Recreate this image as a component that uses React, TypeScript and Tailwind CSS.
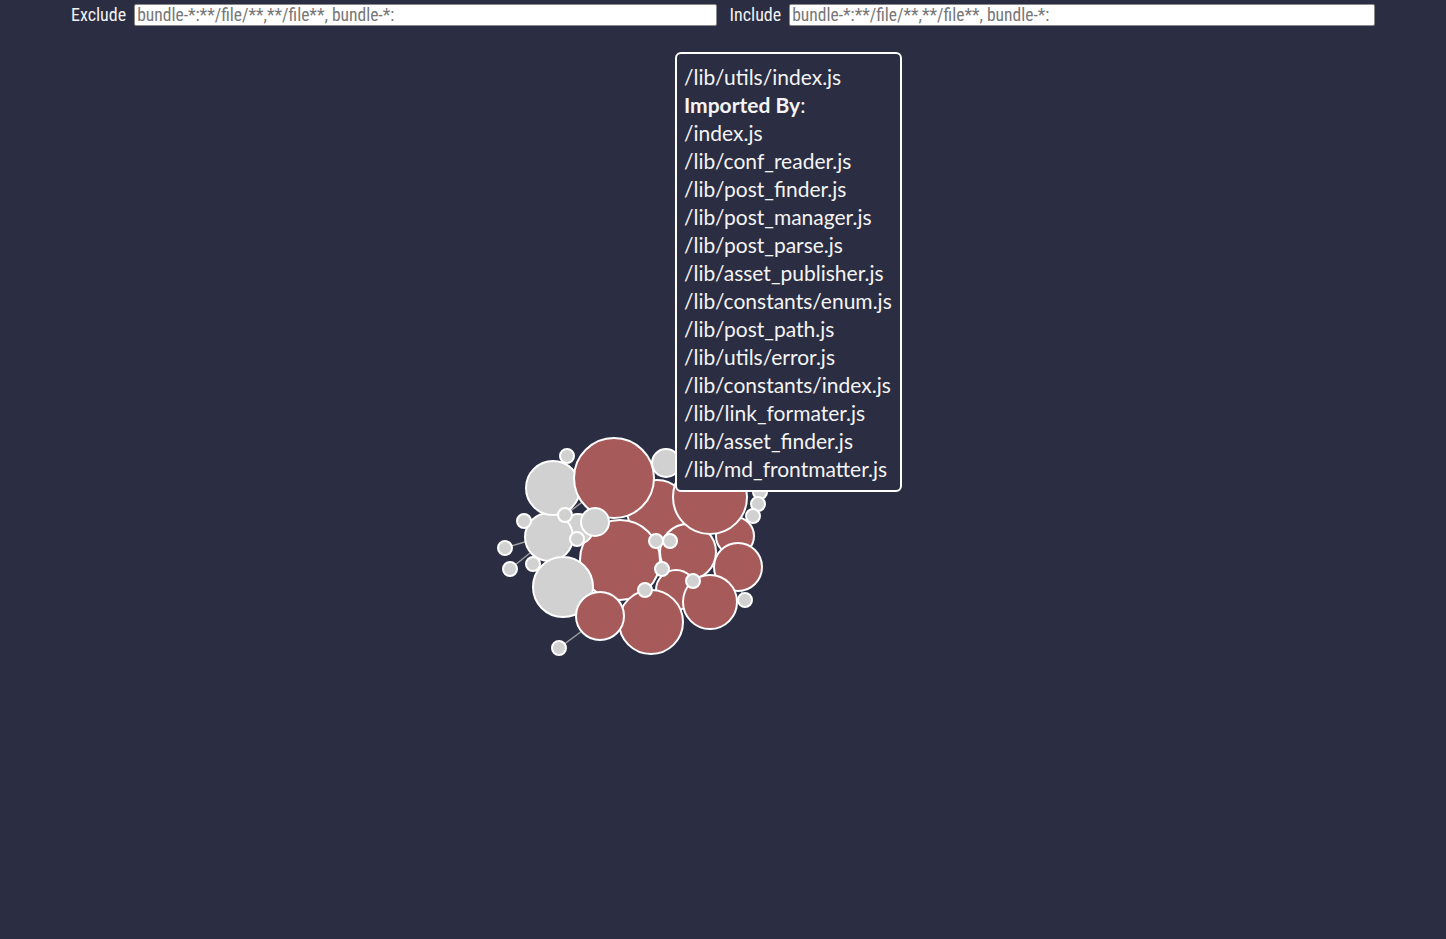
import React from 'react';

type Node = { x: number; y: number; r: number; c: 'red' | 'gray' };

const FILL = { red: '#a65b5a', gray: '#d1d1d1' };

// back to front
const nodes: Node[] = [
  { x: 666, y: 463, r: 14, c: 'gray' },
  { x: 657, y: 510, r: 30, c: 'red' },
  { x: 688, y: 552, r: 28, c: 'red' },
  { x: 676, y: 590, r: 20, c: 'red' },
  { x: 620, y: 560, r: 40, c: 'red' },
  { x: 735, y: 536, r: 19, c: 'red' },
  { x: 738, y: 567, r: 24, c: 'red' },
  { x: 710, y: 497, r: 37, c: 'red' },
  { x: 578, y: 529, r: 15, c: 'gray' },
  { x: 549, y: 537, r: 24, c: 'gray' },
  { x: 553, y: 488, r: 27, c: 'gray' },
  { x: 614, y: 478, r: 40, c: 'red' },
  { x: 595, y: 522, r: 14, c: 'gray' },
  { x: 563, y: 587, r: 30, c: 'gray' },
  { x: 651, y: 622, r: 32, c: 'red' },
  { x: 710, y: 602, r: 27, c: 'red' },
  { x: 600, y: 616, r: 24, c: 'red' },
];

const dots: [number, number][] = [
  [567, 456], [565, 515], [524, 521], [577, 539], [505, 548], [510, 569],
  [533, 564], [559, 648], [656, 541], [670, 541], [662, 569], [693, 581],
  [645, 590], [745, 600], [760, 492], [758, 504], [753, 516],
];

const links: [number, number, number, number][] = [
  [505, 548, 528, 541],
  [510, 569, 530, 553],
  [559, 648, 582, 631],
  [533, 564, 545, 556],
  [565, 515, 585, 500],
  [745, 600, 740, 588],
];

const importedBy = [
  '/index.js',
  '/lib/conf_reader.js',
  '/lib/post_finder.js',
  '/lib/post_manager.js',
  '/lib/post_parse.js',
  '/lib/asset_publisher.js',
  '/lib/constants/enum.js',
  '/lib/post_path.js',
  '/lib/utils/error.js',
  '/lib/constants/index.js',
  '/lib/link_formater.js',
  '/lib/asset_finder.js',
  '/lib/md_frontmatter.js',
];

const Filter = ({ label }: { label: string }) => (
  <label className="flex flex-1 items-center gap-2">
    <span className="text-[18px] leading-[22px] text-[#f2f2f2]">{label}</span>
    <input
      className="h-[22px] flex-1 rounded-[2px] border border-[#8a8a8a] bg-white px-[2px] text-[17.5px] text-black placeholder:text-[#777]"
      placeholder="bundle-*:**/file/**,**/file**, bundle-*:"
    />
  </label>
);

export default function App() {
  return (
    <div
      className="relative h-screen overflow-hidden bg-[#2b2d42]"
      style={{ fontFamily: '"Roboto Condensed", "Liberation Sans Narrow", Roboto, sans-serif' }}
    >
      <div className="flex h-[30px] items-center gap-[13px] px-[71px]">
        <Filter label="Exclude" />
        <Filter label="Include" />
      </div>

      <svg className="block" width={1446} height={909} viewBox="0 30 1446 909">
        {links.map(([x1, y1, x2, y2], i) => (
          <line key={i} x1={x1} y1={y1} x2={x2} y2={y2} stroke="#a0a0a0" strokeWidth={1.5} />
        ))}
        {nodes.map((n, i) => (
          <circle key={i} cx={n.x} cy={n.y} r={n.r} fill={FILL[n.c]} stroke="#fff" strokeWidth={2} />
        ))}
        {dots.map(([x, y], i) => (
          <circle key={i} cx={x} cy={y} r={7} fill={FILL.gray} stroke="#fff" strokeWidth={2} />
        ))}
      </svg>

      <div
        className="absolute left-[675px] top-[52px] w-[227px] rounded-[6px] border-2 border-white bg-[#2b2d42] pb-[7px] pl-[7px] pt-[9px] text-[21px] leading-[28px] text-[#f4f4f4]"
        style={{ fontFamily: 'Lato, "Noto Sans", sans-serif' }}
      >
        <div>/lib/utils/index.js</div>
        <div>
          <b>Imported By</b>:
        </div>
        {importedBy.map((f) => (
          <div key={f}>{f}</div>
        ))}
      </div>
    </div>
  );
}
